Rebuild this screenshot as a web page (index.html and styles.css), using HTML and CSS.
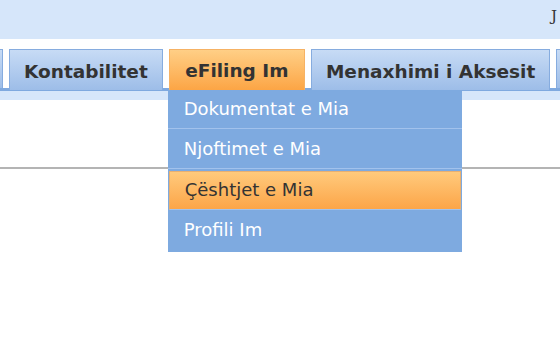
FILE: index.html
```html
<!DOCTYPE html>
<html>
<head>
<meta charset="utf-8">
<link rel="stylesheet" href="styles.css">
</head>
<body>
<div class="topbar"><span class="user">J</span></div>
<div class="nav">
  <ul class="tabs">
    <li class="tab tab-first"></li>
    <li class="tab"><a>Kontabilitet</a></li>
    <li class="tab tab-active"><a>eFiling Im</a>
      <ul class="menu">
        <li class="menu-item">Dokumentat e Mia</li>
        <li class="menu-item">Njoftimet e Mia</li>
        <li class="menu-item menu-hover">Çështjet e Mia</li>
        <li class="menu-item">Profili Im</li>
      </ul>
    </li>
    <li class="tab"><a>Menaxhimi i Aksesit</a></li>
    <li class="tab tab-last"></li>
  </ul>
  <div class="navbar-strip"></div>
</div>
<div class="content">
  <div class="rule"></div>
</div>
</body>
</html>
```

FILE: styles.css
```css
html {
  overflow: hidden;
}

body {
  margin: 0;
  padding: 0;
  min-height: 341px;
  background: #ffffff;
  font-family: "DejaVu Sans", Verdana, sans-serif;
}

.topbar {
  height: 39px;
  background: #d6e6fa;
  display: flex;
  justify-content: flex-end;
  align-items: flex-start;
  white-space: nowrap;
}

.user {
  font-family: "DejaVu Serif", serif;
  font-size: 15px;
  color: #333;
  margin-top: 7px;
  margin-right: 3px;
}

.nav {
  padding-top: 10px;
}

.tabs {
  list-style: none;
  margin: 0;
  padding: 0;
  display: flex;
  gap: 6px;
  height: 39px;
  white-space: nowrap;
}

.tab {
  position: relative;
  flex: none;
  height: 38px;
  border: 1px solid #86acdf;
  border-bottom: none;
  background: linear-gradient(#c7dbf5, #9dbde8);
  display: flex;
  align-items: center;
  padding: 2px 14px 0 14px;
  box-sizing: content-box;
  font-weight: bold;
  font-size: 18.5px;
  color: #333;
}

.tab-first {
  width: 2px;
  padding: 0;
  border-left: none;
}

.tab-last {
  flex: 1 1 auto;
  min-width: 0;
  padding: 0;
  border-right: none;
}

.tab-active {
  background: linear-gradient(#ffcf86, #fca545);
  border-color: #f6b264;
  height: 40px;
  padding: 0 15.5px;
  z-index: 2;
}

.navbar-strip {
  height: 3px;
  background: #7fa9df;
  border-bottom: 9px solid #d6e6fa;
}

.menu {
  position: absolute;
  left: -2px;
  top: 40px;
  width: 294px;
  list-style: none;
  margin: 0;
  padding: 0;
  background: #7eaae0;
  font-weight: normal;
  font-size: 18px;
}

.menu-item {
  height: 40px;
  line-height: 39px;
  padding: 0 16px;
  color: #ffffff;
  border-bottom: 1px solid #a2c2ec;
  box-sizing: border-box;
}

.menu-item:first-child {
  height: 39px;
  line-height: 38px;
}

.menu-item:last-child {
  border-bottom: none;
  height: 42px;
}

.menu-hover {
  background: linear-gradient(#ffca7c, #fca548);
  color: #333;
  margin: 2px 1px 0 1px;
  height: 39px;
  padding-left: 15px;
  border: 1px solid #e8b070;
  line-height: 36px;
  border-bottom: 1px solid #a2c2ec;
}

.content {
  padding-top: 67px;
}

.rule {
  height: 2px;
  background: #b4b4b4;
}
```
